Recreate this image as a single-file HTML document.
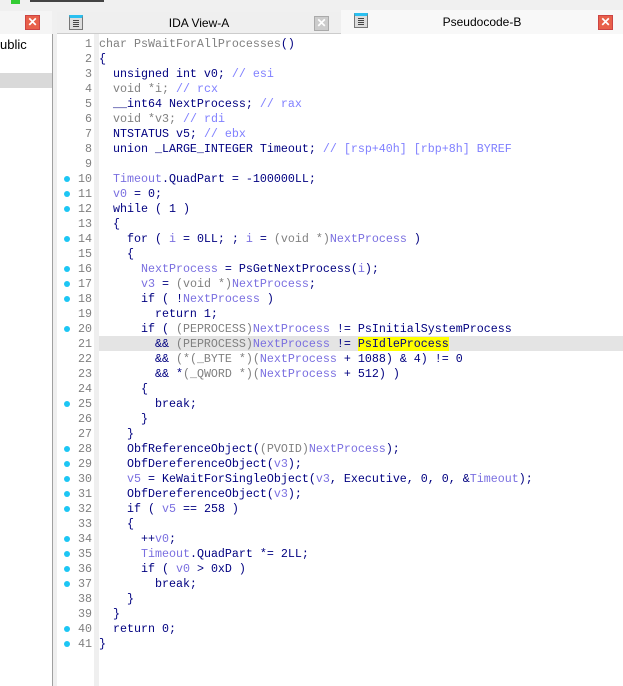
<!DOCTYPE html>
<html><head><meta charset="utf-8"><style>
*{margin:0;padding:0;box-sizing:border-box}
body{width:623px;height:686px;overflow:hidden;background:#f0f0f0;font-family:"Liberation Sans",sans-serif;position:relative}
.abs{position:absolute}
.code{font-family:"Liberation Mono",monospace;font-size:11.67px;line-height:15px;white-space:pre;color:#000080}
.k{color:#000080}.g{color:#808080}.v{color:#7a6fe0}.c{color:#8080ff}
.ln{position:absolute;left:57px;width:35px;text-align:right;color:#808080;font-family:"Liberation Mono",monospace;font-size:11.67px;line-height:15px}
.dot{position:absolute;left:64px;width:6px;height:6px;border-radius:50%;background:#1cc6f4}
.x{position:absolute;width:15px;height:15px;border:1px solid #c44;background:#e8604a;color:#fff;font-size:12px;line-height:13px;text-align:center;font-weight:bold}
.icon{position:absolute;width:14px;height:15px;border:1px solid #777;background:#ddd;border-top:3px solid #2bc0f0}
.icon:after{content:"";position:absolute;left:3px;top:2px;width:6px;height:7px;background:repeating-linear-gradient(#444 0 1px,transparent 1px 2px)}
</style></head><body>
<div class="abs" style="left:0;top:0;width:623px;height:10px;background:#f0f0f0"></div>
<div class="abs" style="left:11px;top:0;width:9px;height:4px;background:#3c3"></div>
<div class="abs" style="left:30px;top:0;width:74px;height:2px;background:#444"></div>
<div class="abs" style="left:0;top:11px;width:52px;height:23px;background:#f5f5f5"></div>
<div class="x" style="left:25px;top:15px">✕</div>
<div class="abs" style="left:0;top:34px;width:52px;height:652px;background:#fff"></div>
<div class="abs" style="left:0;top:37px;font-size:13px;color:#000">ublic</div>
<div class="abs" style="left:0;top:73px;width:52px;height:15px;background:#d9d9d9"></div>
<div class="abs" style="left:52px;top:34px;width:1px;height:652px;background:#a0a0a0"></div>
<div class="abs" style="left:57px;top:12px;width:284px;height:22px;background:#efefef;border-bottom:1px solid #ccc"></div>
<div class="icon" style="left:69px;top:15px"></div>
<div class="abs" style="left:57px;top:16px;width:284px;text-align:center;font-size:12px;color:#000">IDA View-A</div>
<div class="x" style="left:314px;top:16px;background:#ccc;border-color:#aaa">✕</div>
<div class="abs" style="left:341px;top:10px;width:282px;height:24px;background:#f8f8f8"></div>
<div class="icon" style="left:354px;top:13px"></div>
<div class="abs" style="left:341px;top:15px;width:282px;text-align:center;font-size:12px;color:#000">Pseudocode-B</div>
<div class="x" style="left:598px;top:15px">✕</div>
<div class="abs" style="left:53px;top:34px;width:4px;height:652px;background:#efefef"></div>
<div class="abs" style="left:57px;top:34px;width:37px;height:652px;background:#fff"></div>
<div class="abs" style="left:94px;top:34px;width:5px;height:652px;background:#efefef"></div>
<div class="abs" style="left:99px;top:34px;width:524px;height:652px;background:#fff"></div>
<div class="abs" style="left:99px;top:336px;width:524px;height:15px;background:#e4e4e4"></div>
<div id="lns"></div>
<div class="abs code" style="left:99px;top:37px"><span class="g">char PsWaitForAllProcesses</span>()
{
  unsigned int v0; <span class="c">// esi</span>
  <span class="g">void *i;</span> <span class="c">// rcx</span>
  __int64 NextProcess; <span class="c">// rax</span>
  <span class="g">void *v3;</span> <span class="c">// rdi</span>
  NTSTATUS v5; <span class="c">// ebx</span>
  union _LARGE_INTEGER Timeout; <span class="c">// [rsp+40h] [rbp+8h] BYREF</span>

  <span class="v">Timeout</span>.QuadPart = -100000LL;
  <span class="v">v0</span> = 0;
  while ( 1 )
  {
    for ( <span class="v">i</span> = 0LL; ; <span class="v">i</span> = <span class="g">(void *)</span><span class="v">NextProcess</span> )
    {
      <span class="v">NextProcess</span> = PsGetNextProcess(<span class="v">i</span>);
      <span class="v">v3</span> = <span class="g">(void *)</span><span class="v">NextProcess</span>;
      if ( !<span class="v">NextProcess</span> )
        return 1;
      if ( <span class="g">(PEPROCESS)</span><span class="v">NextProcess</span> != PsInitialSystemProcess
        &amp;&amp; <span class="g">(PEPROCESS)</span><span class="v">NextProcess</span> != <span style="background:#ffff00">PsIdleProcess</span>
        &amp;&amp; <span class="g">(*(_BYTE *)(</span><span class="v">NextProcess</span> + 1088) &amp; 4) != 0
        &amp;&amp; *<span class="g">(_QWORD *)(</span><span class="v">NextProcess</span> + 512) )
      {
        break;
      }
    }
    ObfReferenceObject(<span class="g">(PVOID)</span><span class="v">NextProcess</span>);
    ObfDereferenceObject(<span class="v">v3</span>);
    <span class="v">v5</span> = KeWaitForSingleObject(<span class="v">v3</span>, Executive, 0, 0, &amp;<span class="v">Timeout</span>);
    ObfDereferenceObject(<span class="v">v3</span>);
    if ( <span class="v">v5</span> == 258 )
    {
      ++<span class="v">v0</span>;
      <span class="v">Timeout</span>.QuadPart *= 2LL;
      if ( <span class="v">v0</span> &gt; 0xD )
        break;
    }
  }
  return 0;
}</div>
<script>
var d=[10,11,12,14,16,17,18,20,25,28,29,30,31,32,34,35,36,37,40,41],h="";
for(var n=1;n<=41;n++){var t=37+15*(n-1);h+='<div class="ln" style="top:'+t+'px">'+n+'</div>';if(d.indexOf(n)>=0)h+='<div class="dot" style="top:'+(t+4)+'px"></div>';}
document.getElementById("lns").innerHTML=h;
</script>
</body></html>
